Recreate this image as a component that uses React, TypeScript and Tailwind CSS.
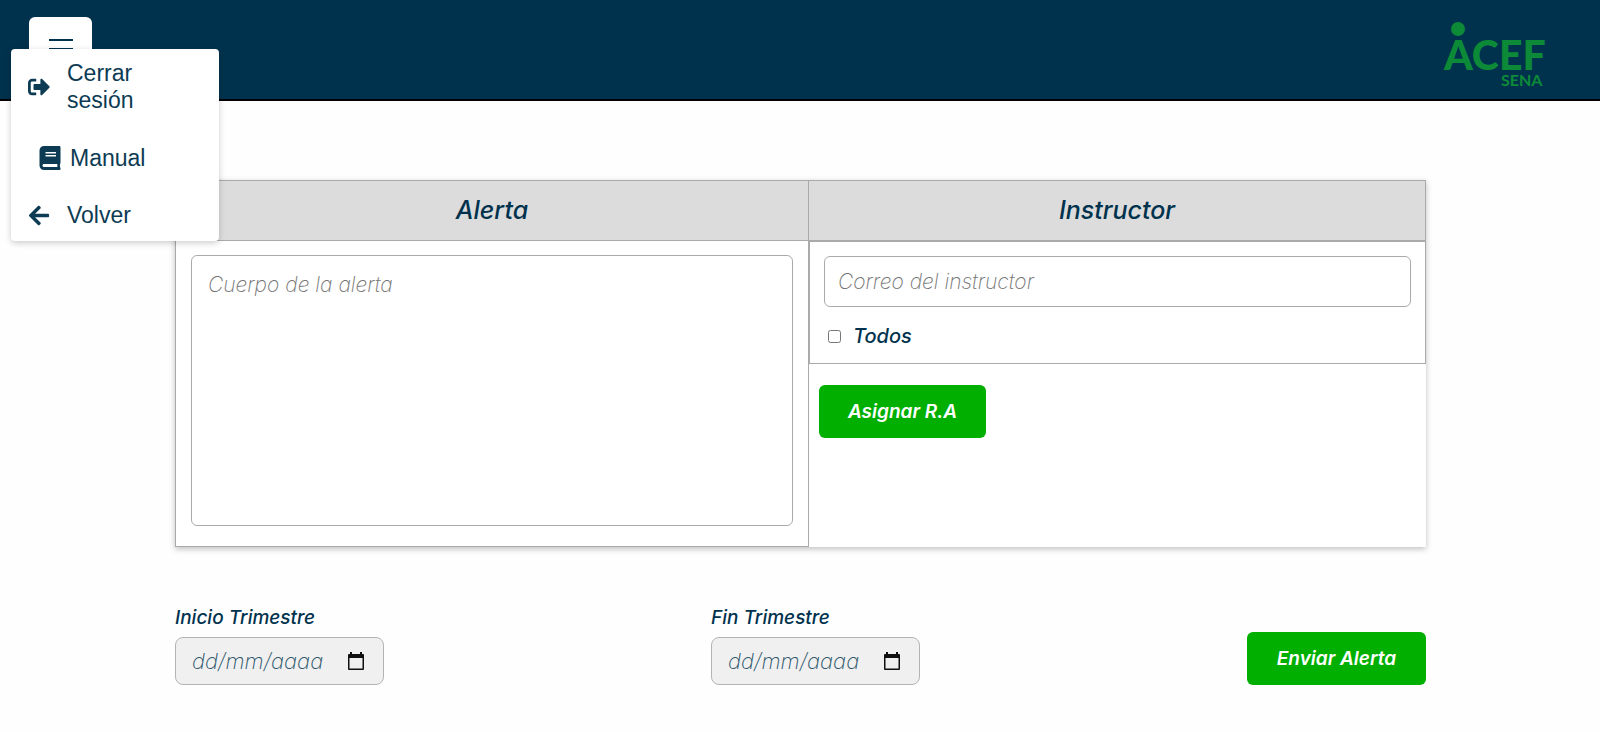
import { useState } from "react";
import { FaArrowLeft, FaBook, FaSignOutAlt } from "react-icons/fa";

function Logo() {
  return (
    <svg
      className="h-[72px] w-[108px] not-italic"
      viewBox="0 0 108 72"
      role="img"
      aria-label="ACEF SENA"
      fill="#0c8a38"
      fontFamily="Lato, sans-serif"
    >
      <circle cx="15" cy="9" r="7" />
      <text x="1" y="50" fontSize="41" fontWeight="900">
        ACEF
      </text>
      <text x="58" y="66" fontSize="16" fontWeight="700">
        SENA
      </text>
    </svg>
  );
}

function CalendarIcon() {
  return (
    <svg className="h-5 w-5" viewBox="0 0 20 20" aria-hidden="true">
      <path
        fill="#101010"
        d="M4 1h2v2h8V1h2v2h1a1 1 0 0 1 1 1v14a1 1 0 0 1-1 1H3a1 1 0 0 1-1-1V4a1 1 0 0 1 1-1h1zM3.500 7v10.500h13V7z"
      />
    </svg>
  );
}

function DateField({ id, label }: { id: string; label: string }) {
  return (
    <div className="flex flex-col gap-[7px]">
      <label htmlFor={id} className="text-[19px] leading-6 font-medium">
        {label}
      </label>
      <div className="flex h-12 w-[209px] items-center justify-between rounded-lg border border-[#b4b4b4] bg-[#f0f0f0] pr-[17px] pl-4">
        <input
          id={id}
          type="text"
          placeholder="dd/mm/aaaa"
          className="w-[145px] bg-transparent text-[22px] font-extralight italic outline-none placeholder:text-[#2d566b]"
        />
        <button type="button" aria-label={`Abrir calendario: ${label}`}>
          <CalendarIcon />
        </button>
      </div>
    </div>
  );
}

function Menu() {
  return (
    <nav className="absolute top-[49px] left-[11px] z-10 flex h-48 w-52 flex-col justify-between rounded bg-white pt-[11px] pr-10 pb-3 pl-[17px] font-['Liberation_Sans',Arial,sans-serif] text-[23px] leading-[27px] text-[#0d3b54] not-italic shadow-[0_2px_6px_rgba(0,0,0,0.2)]">
      <a href="#salir" className="flex items-center gap-[17px]">
        <FaSignOutAlt className="h-[22px] w-[22px] shrink-0" />
        <span>Cerrar sesión</span>
      </a>
      <a href="#manual" className="flex items-center gap-[9px] pl-[11px]">
        <FaBook className="h-6 w-[22px] shrink-0" />
        <span>Manual</span>
      </a>
      <a href="#volver" className="flex items-center gap-[17px]">
        <FaArrowLeft className="h-[23px] w-[22px] shrink-0" />
        <span>Volver</span>
      </a>
    </nav>
  );
}

export default function App() {
  const [open, setOpen] = useState(true);

  return (
    <div className="min-h-screen bg-[#fefefe] font-['Inter','Liberation_Sans',sans-serif] text-[#00324d] italic [font-feature-settings:'cv11']">
      <header className="relative flex h-[101px] items-start justify-between border-b-2 border-black bg-[#00324d] pr-[49px] pl-[29px]">
        <button
          type="button"
          aria-label="Menú"
          aria-expanded={open}
          onClick={() => setOpen(!open)}
          className="mt-[17px] flex h-16 w-[63px] flex-col items-center gap-[7px] rounded-md bg-white pt-[22px]"
        >
          <span className="h-[2px] w-6 bg-[#00324d]" />
          <span className="h-[2px] w-6 bg-[#00324d]" />
          <span className="h-[2px] w-6 bg-[#00324d]" />
        </button>
        <div className="pt-5">
          <Logo />
        </div>
        {open && <Menu />}
      </header>

      <main className="mr-[174px] ml-[175px] pt-[79px]">
        <form onSubmit={(e) => e.preventDefault()}>
          <div className="grid grid-cols-[634fr_617fr] bg-white shadow-[0_2px_6px_rgba(0,0,0,0.25)]">
            <section className="flex flex-col border border-[#aaaaaa]">
              <h2 className="flex h-[60px] items-center justify-center border-b border-[#aaaaaa] bg-[#dcdcdc] text-[25px] font-medium">
                <label htmlFor="alerta">Alerta</label>
              </h2>
              <div className="px-[15px] pt-[14px] pb-5">
                <textarea
                  id="alerta"
                  placeholder="Cuerpo de la alerta"
                  className="block h-[271px] w-full resize-none rounded-md border border-[#aaaaaa] bg-white px-4 py-[11px] text-[21px] leading-9 font-extralight outline-none placeholder:text-[#757575]"
                />
              </div>
            </section>

            <section className="flex flex-col">
              <h2 className="flex h-[61px] items-center justify-center border-y border-r border-[#aaaaaa] bg-[#dcdcdc] text-[25px] font-medium">
                <label htmlFor="correo">Instructor</label>
              </h2>
              <div className="flex flex-col border border-[#aaaaaa] px-[14px] pt-[14px] pb-[15px]">
                <input
                  id="correo"
                  type="email"
                  placeholder="Correo del instructor"
                  className="h-[51px] w-full rounded-md border border-[#aaaaaa] bg-white px-[13px] text-[21px] font-extralight outline-none placeholder:text-[#757575]"
                />
                <label className="mt-[17px] flex items-center gap-3 pl-1 text-xl leading-6 font-medium">
                  <input type="checkbox" className="h-[13px] w-[13px]" />
                  Todos
                </label>
              </div>
              <button
                type="button"
                className="mt-[21px] ml-[10px] h-[53px] w-[167px] rounded-md bg-[#00af00] pt-[2px] text-[19px] font-semibold text-white italic"
              >
                Asignar R.A
              </button>
            </section>
          </div>

          <div className="flex items-end justify-between pt-[59px]">
            <DateField id="inicio" label="Inicio Trimestre" />
            <DateField id="fin" label="Fin Trimestre" />
            <button
              type="submit"
              className="h-[53px] w-[179px] rounded-md bg-[#00af00] pt-[2px] text-[19px] font-semibold text-white italic"
            >
              Enviar Alerta
            </button>
          </div>
        </form>
      </main>
    </div>
  );
}
